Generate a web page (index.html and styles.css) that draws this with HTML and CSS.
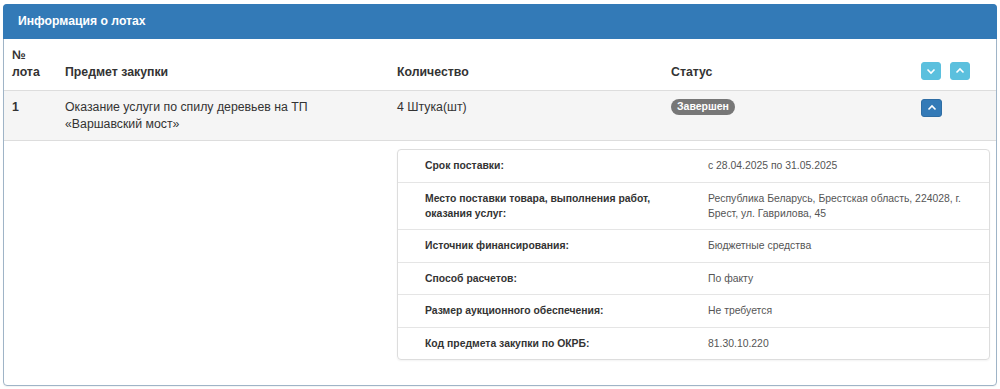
FILE: index.html
```html
<!DOCTYPE html>
<html lang="ru">
<head>
    <meta charset="UTF-8">
    <meta name="viewport" content="width=device-width, initial-scale=1.0">
    <title>Информация о лотах</title>
    <link rel="stylesheet" href="styles.css">
</head>
<body>
    <div class="page">
        <div class="panel">
            <div class="panel-heading">Информация о лотах</div>
            <table class="lots">
                <thead>
                    <tr>
                        <th class="col-num">№<br>лота</th>
                        <th class="col-subject">Предмет закупки</th>
                        <th class="col-qty">Количество</th>
                        <th class="col-status">Статус</th>
                        <th class="col-actions">
                            <div class="btn-group">
                                <button class="btn btn-info" title="Развернуть все">
                                    <svg width="10" height="10" viewBox="0 0 10 10"><path d="M1.5 3.5 L5 7 L8.5 3.5" fill="none" stroke="#fff" stroke-width="1.6"/></svg>
                                </button>
                                <button class="btn btn-info" title="Свернуть все">
                                    <svg width="10" height="10" viewBox="0 0 10 10"><path d="M1.5 6.5 L5 3 L8.5 6.5" fill="none" stroke="#fff" stroke-width="1.6"/></svg>
                                </button>
                            </div>
                        </th>
                    </tr>
                </thead>
                <tbody>
                    <tr class="lot-row">
                        <td class="lot-num">1</td>
                        <td>Оказание услуги по спилу деревьев на ТП<br>«Варшавский мост»</td>
                        <td>4 Штука(шт)</td>
                        <td><span class="label">Завершен</span></td>
                        <td>
                            <button class="btn btn-primary" title="Свернуть">
                                <svg width="10" height="10" viewBox="0 0 10 10"><path d="M1.5 6.5 L5 3 L8.5 6.5" fill="none" stroke="#fff" stroke-width="1.6"/></svg>
                            </button>
                        </td>
                    </tr>
                    <tr class="details-row">
                        <td></td>
                        <td></td>
                        <td colspan="3">
                            <div class="details">
                                <div class="detail">
                                    <div class="detail-label">Срок поставки:</div>
                                    <div class="detail-value">с 28.04.2025 по 31.05.2025</div>
                                </div>
                                <div class="detail">
                                    <div class="detail-label">Место поставки товара, выполнения работ,<br>оказания услуг:</div>
                                    <div class="detail-value">Республика Беларусь, Брестская область, 224028, г.<br>Брест, ул. Гаврилова, 45</div>
                                </div>
                                <div class="detail">
                                    <div class="detail-label">Источник финансирования:</div>
                                    <div class="detail-value">Бюджетные средства</div>
                                </div>
                                <div class="detail">
                                    <div class="detail-label">Способ расчетов:</div>
                                    <div class="detail-value">По факту</div>
                                </div>
                                <div class="detail">
                                    <div class="detail-label">Размер аукционного обеспечения:</div>
                                    <div class="detail-value">Не требуется</div>
                                </div>
                                <div class="detail">
                                    <div class="detail-label">Код предмета закупки по ОКРБ:</div>
                                    <div class="detail-value">81.30.10.220</div>
                                </div>
                            </div>
                        </td>
                    </tr>
                </tbody>
            </table>
        </div>
    </div>
</body>
</html>
```

FILE: styles.css
```css
body {
    font-family: "Liberation Sans", Arial, sans-serif;
    font-size: 12.3px;
    color: #333;
    background-color: #fff;
    margin: 0;
    padding: 0;
}

.page {
    padding: 4px 3px;
}

.panel {
    border: 1px solid #9fb4c7;
    border-radius: 4px;
    box-shadow: 0 1px 1px rgba(0, 0, 0, 0.05);
    padding-bottom: 17px;
}

.panel-heading {
    background-color: #337ab7;
    color: #fff;
    font-weight: bold;
    font-size: 12.2px;
    line-height: 15px;
    padding: 10px 15px;
    margin: -1px -1px 0;
    border-radius: 4px 4px 0 0;
}

.lots {
    width: 100%;
    border-collapse: collapse;
}

.lots th,
.lots td {
    padding: 8px 8px;
    line-height: 16.5px;
    text-align: left;
}

.lots th {
    vertical-align: bottom;
    font-weight: bold;
    padding-bottom: 10px;
}

.lots td {
    vertical-align: top;
}

.col-num { width: 37px; }
.col-subject { width: 316px; }
.col-qty { width: 258px; }
.col-status { width: 234px; }

.lot-row td {
    background-color: #f5f5f5;
    border-top: 1px solid #ddd;
    border-bottom: 1px solid #ddd;
}

.lot-num {
    font-weight: bold;
}

.btn-group {
    display: flex;
    gap: 9px;
    margin-bottom: 0;
}

.btn {
    display: inline-flex;
    align-items: center;
    justify-content: center;
    width: 20px;
    height: 18px;
    padding: 0;
    border: 1px solid transparent;
    border-radius: 3px;
    cursor: pointer;
    vertical-align: middle;
}

.btn-info {
    background-color: #5bc0de;
    border-color: #5bc0de;
}

.btn-primary {
    background-color: #337ab7;
    border-color: #2e6da4;
    width: 21px;
}

.label {
    display: inline-block;
    background-color: #777;
    color: #fff;
    font-size: 10.5px;
    font-weight: bold;
    line-height: 13px;
    padding: 1px 6px 2px;
    border-radius: 8px;
    vertical-align: 1px;
}

.details {
    border: 1px solid #ddd;
    border-radius: 4px;
    box-shadow: 0 1px 2px rgba(0, 0, 0, 0.05);
    margin-right: -2px;
    font-size: 10.4px;
}

.detail {
    display: grid;
    grid-template-columns: 310px 1fr;
    border-top: 1px solid #e5e5e5;
}

.detail:first-child {
    border-top: none;
}

.detail-label {
    font-weight: bold;
    color: #333;
    padding: 8px 10px 8.5px 27px;
    line-height: 15px;
}

.detail-value {
    color: #555;
    padding: 8px 10px 8.5px 0;
    line-height: 15px;
}
```
